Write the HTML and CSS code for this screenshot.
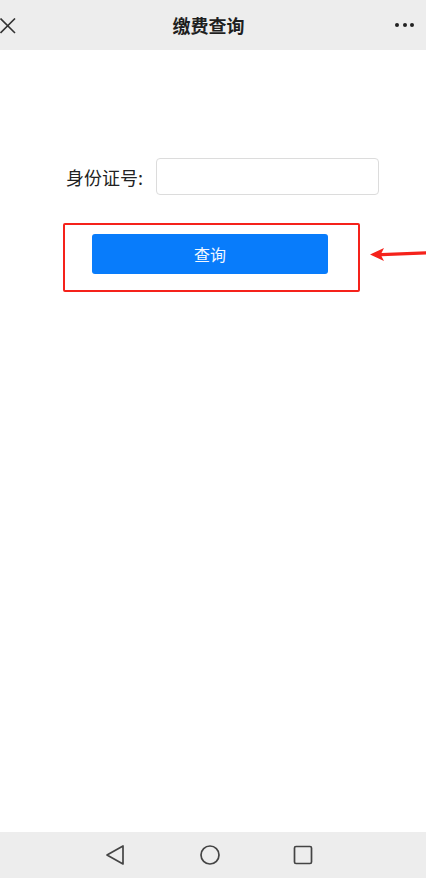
FILE: index.html
```html
<!DOCTYPE html>
<html lang="zh-CN">
<head>
<meta charset="utf-8">
<title>缴费查询</title>
<link rel="stylesheet" href="styles.css">
</head>
<body>
<div class="screen">
  <header class="topbar">
    <svg class="close-icon" width="16" height="16" viewBox="0 0 16 16"><path d="M0.5 0.5 L15 15 M15 0.5 L0.5 15" stroke="#333" stroke-width="1.6" fill="none"/></svg>
    <h1 class="title">缴费查询</h1>
    <div class="more"><span></span><span></span><span></span></div>
  </header>
  <main class="content">
    <div class="form-row">
      <label class="label" for="idno">身份证号:</label>
      <input class="input" id="idno" type="text">
    </div>
    <div class="highlight">
      <button class="btn" type="button">查询</button>
    </div>
    <svg class="arrow" width="58" height="18" viewBox="0 0 58 18"><path d="M2 9.5 L16 3 L13.5 8 L58 6.2 L58 9.4 L13.5 11.3 L16 16 Z" fill="#f5221b"/></svg>
  </main>
  <nav class="navbar">
    <svg width="20" height="22" viewBox="0 0 20 22"><path d="M18 2 L18 20 L2 11 Z" fill="none" stroke="#444" stroke-width="1.7" stroke-linejoin="round"/></svg>
    <svg width="22" height="22" viewBox="0 0 22 22"><circle cx="12" cy="11" r="9" fill="none" stroke="#444" stroke-width="1.7"/></svg>
    <svg width="20" height="20" viewBox="0 0 20 20"><rect x="1.5" y="1.5" width="17" height="17" rx="1.5" fill="none" stroke="#444" stroke-width="1.7"/></svg>
  </nav>
</div>
</body>
</html>
```
FILE: styles.css
```css
* { box-sizing: border-box; }
html, body { margin: 0; padding: 0; }
body {
  font-family: "Noto Sans CJK SC", "Noto Sans", "Liberation Sans", sans-serif;
  background: #fff;
}
.screen {
  width: 426px;
  height: 878px;
  display: flex;
  flex-direction: column;
}
.topbar {
  height: 50px;
  background: #ededed;
  display: flex;
  align-items: center;
  justify-content: space-between;
  padding: 0 12px 0 0;
  flex-shrink: 0;
}
.close-icon { margin-top: 2px; }
.title {
  margin: 0 0 0 6px;
  font-size: 18px;
  font-weight: bold;
  color: #1f1f1f;
  line-height: 1;
}
.more { display: flex; gap: 3.5px; }
.more span {
  width: 4px; height: 4px; border-radius: 50%; background: #222;
}
.content {
  flex: 1;
  position: relative;
  padding-top: 108px;
  background: #fff;
}
.form-row {
  display: flex;
  align-items: center;
  padding-left: 66px;
  gap: 13px;
}
.label {
  width: 77px;
  font-size: 18px;
  color: #222;
  line-height: 1;
  white-space: nowrap;
}
.input {
  width: 223px;
  height: 37px;
  border: 1px solid #dcdcdc;
  border-radius: 4px;
  background: #fff;
  outline: none;
}
.highlight {
  margin: 28px 0 0 63px;
  width: 297px;
  height: 69px;
  border: 2px solid #f5221b;
  border-radius: 2px;
  padding: 9px 0 0 27px;
}
.btn {
  width: 236px;
  height: 40px;
  border: none;
  border-radius: 3px;
  background: #087cfb;
  color: #f2f7ff;
  font-family: inherit;
  font-size: 16px;
  line-height: 1;
  padding: 0;
}
.arrow {
  position: absolute;
  left: 368px;
  top: 195px;
}
.navbar {
  height: 46px;
  background: #ededed;
  display: flex;
  align-items: center;
  justify-content: center;
  gap: 73px;
  padding-right: 8px;
  flex-shrink: 0;
}
```
